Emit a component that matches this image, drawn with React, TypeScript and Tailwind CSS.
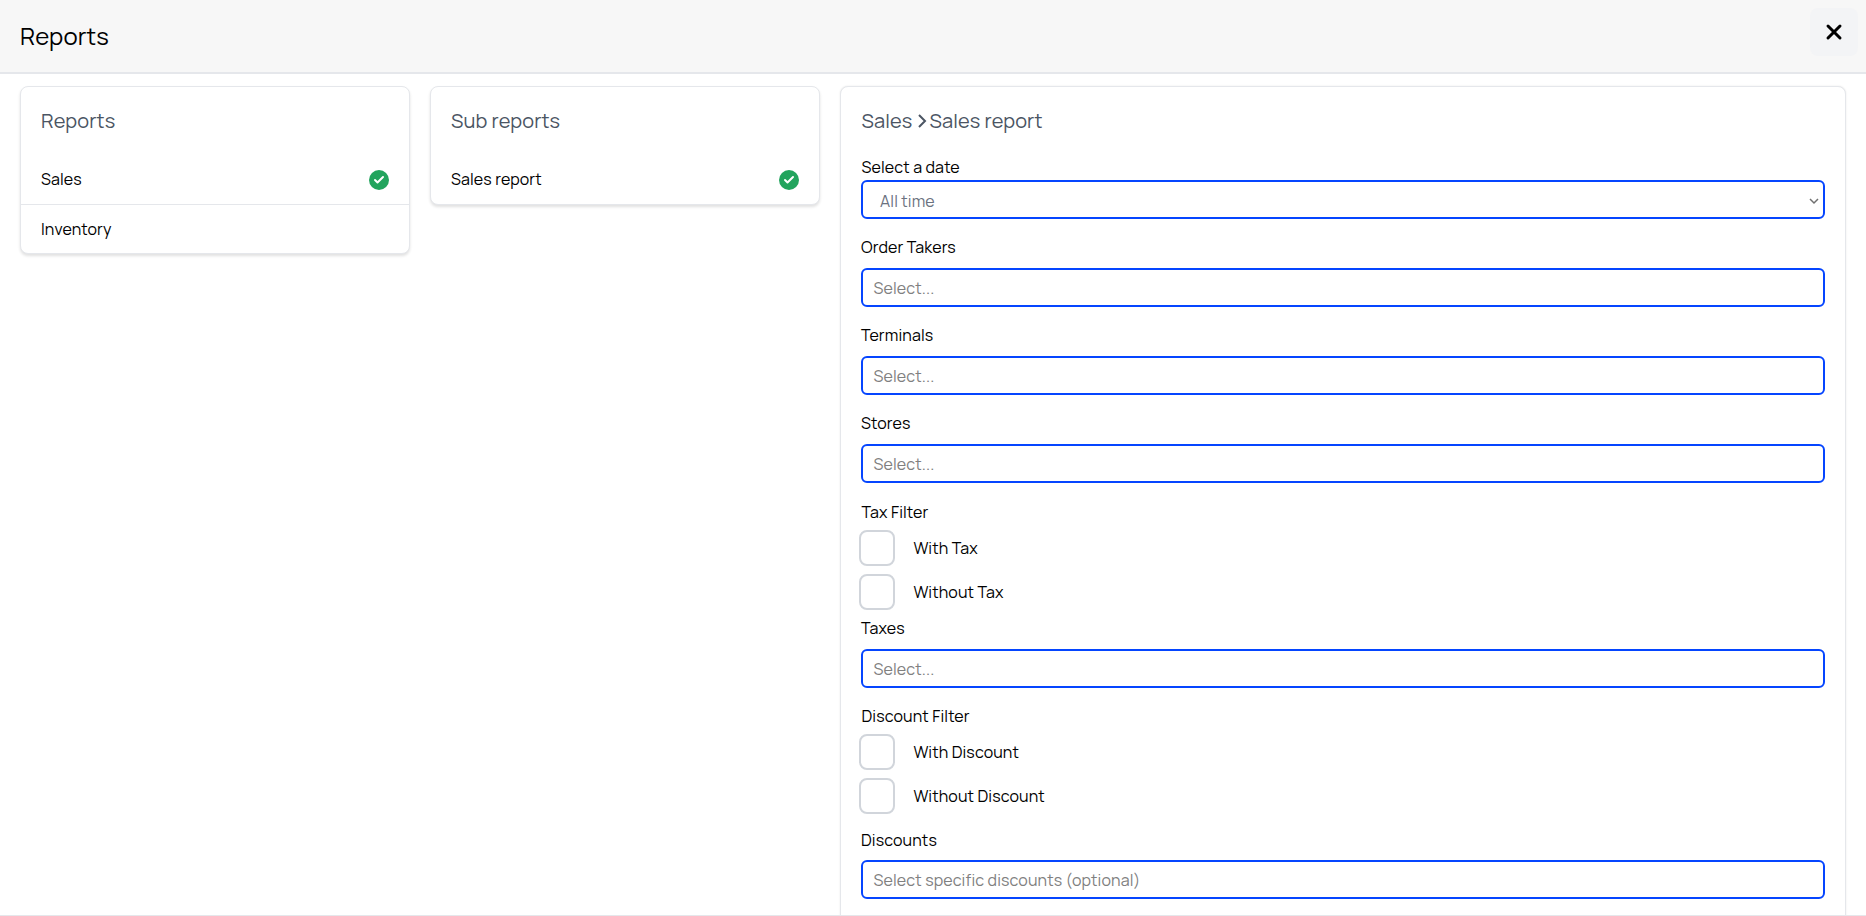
import React from "react";
import { X, Check } from "lucide-react";

function Done() {
  return (
    <span className="flex h-5 w-5 items-center justify-center rounded-full bg-[#22a45d]">
      <Check className="h-3 w-3 text-white" strokeWidth={4} />
    </span>
  );
}

function ListCard({ title, rows }: { title: string; rows: { label: string; done?: boolean }[] }) {
  return (
    <div className="w-[390px] shrink-0 self-start rounded-lg border border-[#e5e7eb] bg-white shadow-[0_2px_3px_rgba(0,0,0,0.12)]">
      <h2 className="px-5 pt-5 pb-5 text-[20px] leading-[28px] text-[#4b5563]">{title}</h2>
      {rows.map((r, i) => (
        <div
          key={r.label}
          className={`flex h-[49px] items-center justify-between px-5 text-[16px] text-black ${i > 0 ? "border-t border-[#e5e7eb]" : ""}`}
        >
          <span className="-mt-[1px]">{r.label}</span>
          {r.done && <Done />}
        </div>
      ))}
    </div>
  );
}

function Label({ children, className = "" }: { children: React.ReactNode; className?: string }) {
  return <div className={`text-[16px] leading-[24px] text-black ${className}`}>{children}</div>;
}

function Field({ label, placeholder, className = "mb-4", labelClass = "mb-[9px]" }: { label: string; placeholder: string; className?: string; labelClass?: string }) {
  return (
    <div className={className}>
      <Label className={labelClass}>{label}</Label>
      <div className="flex h-[39px] items-center rounded-[6px] border-2 border-[#0545ff] bg-white pl-[10.5px] pr-[10px] text-[16px] text-[#808080]">
        {placeholder}
      </div>
    </div>
  );
}

function Box({ label, className = "" }: { label: string; className?: string }) {
  return (
    <div className={`flex h-[36px] items-center ${className}`}>
      <span className="-ml-[2px] h-[36px] w-[36px] rounded-[8px] border-2 border-[#d1d5db] bg-white" />
      <span className="ml-[18.5px] text-[16px] text-black">{label}</span>
    </div>
  );
}

export default function App() {
  return (
    <div className="flex h-[916px] flex-col overflow-hidden border-b border-[#e5e7eb] bg-white font-['Manrope','Inter',sans-serif] tracking-[0.008em]">
      <header className="flex h-[74px] shrink-0 items-start justify-between border-b-2 border-[#e5e7eb] bg-[#f7f7f7] pl-5 pr-[8px]">
        <h1 className="mt-[20px] text-[24px] leading-[32px] text-black">Reports</h1>
        <button className="mt-[8px] flex h-[48px] w-[48px] items-center justify-center rounded-lg bg-[#f3f4f6] text-black">
          <X className="h-6 w-6" strokeWidth={3} />
        </button>
      </header>
      <main className="flex min-h-0 flex-1 items-start gap-5 overflow-hidden px-5 pt-[12px]">
        <ListCard title="Reports" rows={[{ label: "Sales", done: true }, { label: "Inventory" }]} />
        <ListCard title="Sub reports" rows={[{ label: "Sales report", done: true }]} />
        <section className="h-[900px] flex-1 shrink-0 rounded-lg border border-[#e5e7eb] bg-white px-5 pt-5 shadow-[0_0_2px_rgba(0,0,0,0.1)]">
          <h2 className="mb-5 flex items-center pl-[0.5px] text-[20px] leading-[28px] text-[#4b5563]">
            Sales
            <svg className="ml-[5px] mr-[2px] h-[14px] w-[10px]" viewBox="0 0 10 14" fill="none" stroke="currentColor" strokeWidth="2"><path d="M2 1l6 6-6 6" /></svg>
            Sales report
          </h2>
          <Label className="mb-[1px] pl-[0.5px]">Select a date</Label>
          <div className="mb-4 flex h-[39px] items-center justify-between rounded-[6px] border-2 border-[#0545ff] bg-white pl-[17px] pr-[3px] pt-[2px] text-[16px] text-[#6b7280]">
            <span>All time</span>
            <svg className="h-3 w-3 text-[#707070]" viewBox="0 0 12 12" fill="none" stroke="currentColor" strokeWidth="1.5"><path d="M2 4l4 4 4-4" /></svg>
          </div>
          <Field label="Order Takers" placeholder="Select..." />
          <Field label="Terminals" placeholder="Select..." />
          <Field label="Stores" placeholder="Select..." className="mb-[17px]" />
          <Label className="mb-[6px] pl-[0.5px]">Tax Filter</Label>
          <Box label="With Tax" />
          <Box label="Without Tax" className="mt-2" />
          <Field label="Taxes" placeholder="Select..." className="mt-[6px] mb-4" />
          <Label className="mb-[6px] pl-[0.5px]">Discount Filter</Label>
          <Box label="With Discount" />
          <Box label="Without Discount" className="mt-2" />
          <Field label="Discounts" placeholder="Select specific discounts (optional)" className="mt-[14px]" labelClass="mb-2" />
        </section>
      </main>
    </div>
  );
}
